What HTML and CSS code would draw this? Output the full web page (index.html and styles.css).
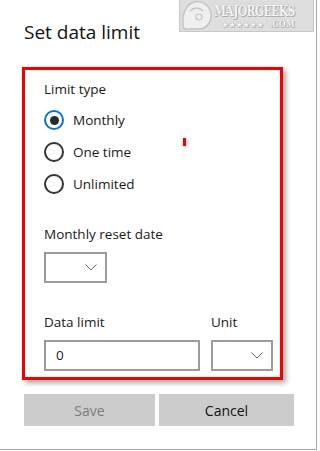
FILE: index.html
```html
<!DOCTYPE html>
<html lang="en">
<head>
    <meta charset="UTF-8">
    <meta name="viewport" content="width=device-width, initial-scale=1.0">
    <title>Set data limit</title>
    <link rel="stylesheet" href="styles.css">
</head>
<body>

    <div class="ventana">
        <div class="marca">
            <svg class="marca-cara" width="34" height="33" viewBox="0 0 34 33">
                <path d="M4 30 C1 20 4 6 14 3 C22 1 29 6 31 14 C32 22 28 28 21 30 Z" fill="#efefef" stroke="#c4c4c4" stroke-width="1.5"/>
                <path d="M10 12 C14 8 19 8 23 12" fill="none" stroke="#c4c4c4" stroke-width="1.5"/>
                <circle cx="19" cy="18" r="3" fill="none" stroke="#c4c4c4" stroke-width="1.2"/>
            </svg>
            <div class="marca-texto">
                <span class="marca-nombre">MAJORGEEKS</span>
                <span class="marca-pie"><span class="estrellas">★★★★★★</span>.COM</span>
            </div>
        </div>

        <h1 class="titulo">Set data limit</h1>

        <div class="recuadro">
            <div class="etiqueta">Limit type</div>
            <div class="opciones">
                <label class="opcion"><span class="radio activo"></span>Monthly</label>
                <label class="opcion"><span class="radio"></span>One time</label>
                <label class="opcion"><span class="radio"></span>Unlimited</label>
            </div>

            <div class="etiqueta reset">Monthly reset date</div>
            <div class="desplegable corto">
                <svg width="12" height="7" viewBox="0 0 12 7"><path d="M0.5 0.5 L6 6 L11.5 0.5" fill="none" stroke="#666" stroke-width="1"/></svg>
            </div>

            <div class="fila">
                <div class="campo">
                    <div class="etiqueta">Data limit</div>
                    <div class="entrada">0</div>
                </div>
                <div class="campo">
                    <div class="etiqueta">Unit</div>
                    <div class="desplegable unidad">
                        <svg width="12" height="7" viewBox="0 0 12 7"><path d="M0.5 0.5 L6 6 L11.5 0.5" fill="none" stroke="#666" stroke-width="1"/></svg>
                    </div>
                </div>
            </div>
            <span class="marca-roja"></span>
        </div>

        <div class="botones">
            <button class="boton desactivado">Save</button>
            <button class="boton">Cancel</button>
        </div>
    </div>

</body>
</html>
```

FILE: styles.css
```css
body {
    margin: 0;
    background-color: #ffffff;
    font-family: "Open Sans", "Noto Sans", sans-serif;
    color: #1a1a1a;
}

.ventana {
    position: relative;
    width: 316px;
    height: 449px;
    border-right: 1px solid #a8a8a8;
    border-bottom: 1px solid #a8a8a8;
    overflow: hidden;
}

/* marca de agua arriba a la derecha */
.marca {
    position: absolute;
    top: -1px;
    left: 179px;
    width: 135px;
    height: 33px;
    box-sizing: border-box;
    background: #dedede;
    border: 1px solid #c8c8c8;
    display: flex;
    align-items: center;
    overflow: hidden;
}

.marca-cara {
    flex: none;
}

.marca-texto {
    display: flex;
    flex-direction: column;
    align-items: flex-end;
    font-family: "DejaVu Serif", serif;
    font-weight: bold;
    font-stretch: condensed;
    color: #f4f4f4;
    text-shadow: 0 0 1px #9a9a9a, 1px 1px 0 #b0b0b0;
    line-height: 1;
}

.marca-nombre {
    font-size: 12px;
    letter-spacing: -0.6px;
    transform: scaleY(1.25);
    margin-top: 3px;
}

.marca-pie {
    font-size: 9px;
    margin-top: 3px;
}

.estrellas {
    font-size: 7px;
    letter-spacing: 1px;
    margin-right: 5px;
}

.titulo {
    margin: 0;
    padding: 18px 0 0 24px;
    font-size: 19px;
    font-weight: normal;
    line-height: 28px;
    color: #111;
}

.recuadro {
    position: relative;
    box-sizing: border-box;
    margin: 21px 0 0 22px;
    width: 261px;
    height: 313px;
    border: 3px solid #f20000;
    box-shadow: 3px 3px 5px rgba(0, 0, 0, 0.35);
    padding: 9px 0 0 19px;
}

.etiqueta {
    font-size: 13.5px;
    line-height: 20px;
    color: #1a1a1a;
}

.opciones {
    margin-top: 11px;
    display: flex;
    flex-direction: column;
    gap: 12px;
}

.opcion {
    display: flex;
    align-items: center;
    font-size: 13.5px;
    line-height: 20px;
}

.radio {
    width: 16px;
    height: 16px;
    border: 2px solid #333;
    border-radius: 50%;
    margin-right: 9px;
    display: flex;
    align-items: center;
    justify-content: center;
}

.radio.activo {
    border-color: #0a74d0;
}

.radio.activo::after {
    content: "";
    width: 9px;
    height: 9px;
    border-radius: 50%;
    background: #2a2a2a;
}

.etiqueta.reset {
    margin-top: 30px;
}

.desplegable {
    box-sizing: border-box;
    height: 31px;
    border: 2px solid #9c9c9c;
    display: flex;
    align-items: center;
    justify-content: flex-end;
    padding-right: 8px;
}

.desplegable.corto {
    width: 63px;
    margin-top: 8px;
}

.fila {
    margin-top: 29px;
    display: flex;
    gap: 11px;
}

.campo .etiqueta {
    margin-bottom: 8px;
}

.entrada {
    box-sizing: border-box;
    width: 156px;
    height: 31px;
    border: 2px solid #9c9c9c;
    padding-left: 10px;
    font-size: 13.5px;
    line-height: 27px;
}

.desplegable.unidad {
    width: 62px;
}

/* pequeña marca roja del original */
.marca-roja {
    position: absolute;
    left: 158px;
    top: 68px;
    width: 3px;
    height: 8px;
    background: #f20000;
    box-shadow: 1px 1px 3px rgba(0, 0, 0, 0.3);
}

.botones {
    margin: 14px 0 0 24px;
    display: flex;
    gap: 4px;
}

.boton {
    width: 131px;
    height: 32px;
    border: none;
    background: #cccccc;
    font-family: "Open Sans", "Noto Sans", sans-serif;
    font-size: 14px;
    color: #111;
    padding: 0;
}

.boton + .boton {
    width: 135px;
}

.boton.desactivado {
    color: #7d7d7d;
}
```
